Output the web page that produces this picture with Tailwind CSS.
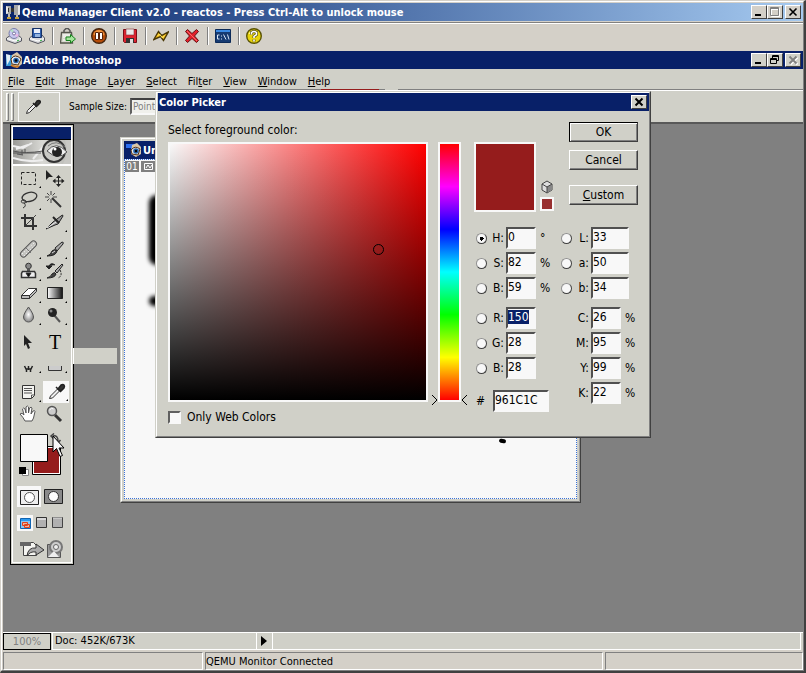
<!DOCTYPE html>
<html lang="en">
<head>
    <meta charset="UTF-8">
    <meta name="viewport" content="width=device-width, initial-scale=1.0">
    <title>Qemu Manager Client v2.0 - reactos</title>
    <script src="https://cdn.jsdelivr.net/npm/@tailwindcss/browser@4"></script>
</head>
<body class="font-['DejaVu_Sans_Condensed','DejaVu_Sans',sans-serif] text-[11px] leading-4 text-black">

    <div class="flex h-screen flex-col border-t border-l border-t-[#d4d0c8] border-l-[#d4d0c8] border-r-2 border-b-2 border-r-[#404040] border-b-[#404040] bg-[#d4d0c8]">
    <div class="flex flex-1 flex-col border border-t-white border-l-white border-r-[#808080] border-b-[#808080] pt-px pl-px">

        <!-- Host window title -->
        <header class="flex h-[18px] shrink-0 items-center bg-linear-to-r from-[#0a246a] to-[#a6caf0] pr-0.5 pl-0.5 text-white">
            <svg class="mr-px size-4" viewBox="0 0 16 16">
                <path d="M1 2h5v8H1zM9 1h6v10H9z" fill="#a9a9a9"/>
                <path d="M1 2l2 1v6l-2 1zM13 2l2-1v9l-2 1z" fill="#e8e8e8"/>
                <path d="M6 4h3v4H6zM3 4h1v4H3z" fill="#333"/>
                <path d="M3 10h2v4H3zM11 11h2v3h-2z" fill="#bbb"/>
                <path d="M2 14h4M10 14h4" stroke="#c9a13a" stroke-width="2"/>
            </svg>
            <h1 class="flex-1 pt-0.5 font-bold">Qemu Manager Client v2.0 - reactos - Press Ctrl-Alt to unlock mouse</h1>
            <button aria-label="Minimize" class="h-3.5 w-4 border border-t-white border-l-white border-r-[#404040] border-b-[#404040] bg-[#d4d0c8]">
                <svg class="h-3 w-3.5" viewBox="0 0 14 12"><path d="M3 8h6v2H3z"/></svg>
            </button>
            <button aria-label="Maximize" disabled class="mr-0.5 h-3.5 w-4 border border-t-white border-l-white border-r-[#404040] border-b-[#404040] bg-[#d4d0c8]">
                <svg class="h-3 w-3.5" viewBox="0 0 14 12" fill="none"><path d="M3.500 2.500h8v8h-8zM3 3.500h9" stroke="#fff"/><path d="M2.500 1.500h8v8h-8zM2 2.500h9" stroke="#808080"/></svg>
            </button>
            <button aria-label="Close" class="h-3.5 w-4 border border-t-white border-l-white border-r-[#404040] border-b-[#404040] bg-[#d4d0c8]">
                <svg class="h-3 w-3.5" viewBox="0 0 14 12"><path d="M3.500 2.500l7 7M10.500 2.500l-7 7" stroke="#000" stroke-width="1.600"/></svg>
            </button>
        </header>
        <div class="mt-px mb-px h-0.5 shrink-0 border-t border-b border-t-[#808080] border-b-white"></div>

        <!-- Host toolbar -->
        <nav class="flex h-[26px] shrink-0 items-center gap-[7px] pb-1 pl-[3px]">
            <button aria-label="CD drive"><svg class="size-4" viewBox="0 0 16 16">
                <path d="M.5 10L5 7h7l3.500 3v3L9 15.500 .5 12.500z" fill="#d8d8dc" stroke="#55565f"/><path d="M1 10.500l8 2.500 6-2.500" fill="none" stroke="#fff"/>
                <circle cx="8" cy="5.500" r="5" fill="#c8c8ee" stroke="#777ca8"/><path d="M8 5.500L4 2.500 7 1z" fill="#b2e2c2"/><path d="M8 5.500l5 1-2 3z" fill="#e9b9e5"/><circle cx="8" cy="5.500" r="1.500" fill="#fff" stroke="#7770a0"/><path d="M11 13l2-1" stroke="#2a3"/>
            </svg></button>
            <button aria-label="Floppy drive"><svg class="size-4" viewBox="0 0 16 16">
                <path d="M.5 10L4 7h9l2.500 3v3L9 15.500 .5 12.500z" fill="#d8d8dc" stroke="#55565f"/><path d="M1 10.500l8 2.500 6-2.500" fill="none" stroke="#fff"/>
                <path d="M3.500 .5h9v9h-9z" fill="#2d5dab" stroke="#173269"/><path d="M5 1h6v4H5z" fill="#e9eefa"/><path d="M6 6h5v3H6z" fill="#94b3df"/><path d="M11 13l2-1" stroke="#2a3"/>
            </svg></button>
            <span class="h-[18px] w-px bg-[#808080] shadow-[1px_0_#fff]"></span>
            <button aria-label="Export"><svg class="size-4" viewBox="0 0 16 16">
                <path d="M4 5V2.500L6 .5h2l2 2V5" fill="none" stroke="#555" stroke-width="1.500"/><path d="M1.500 4.500h10l1 10.500H.500z" fill="#d8d8ce" stroke="#55554c" stroke-width="1.300"/><path d="M3 7h7M3 9h3M3 12h3" stroke="#fff"/>
                <path d="M6 9h4.500V6.500L15.500 11l-5 4v-2.500H6z" fill="#a6e49c" stroke="#16831c"/>
            </svg></button>
            <span class="h-[18px] w-px bg-[#808080] shadow-[1px_0_#fff]"></span>
            <button aria-label="Pause"><svg class="size-4" viewBox="0 0 16 16">
                <circle cx="8" cy="8" r="7.300" fill="#b54b08" stroke="#43250f" stroke-width="1.400"/><path d="M2.500 7a5.500 5 0 0 1 11 0q-5 2-11 0" fill="#ec913c"/><path d="M4.500 4.500h3v7h-3zM8.500 4.500h3v7h-3z" fill="#fff" stroke="#582309"/>
            </svg></button>
            <span class="h-[18px] w-px bg-[#808080] shadow-[1px_0_#fff]"></span>
            <button aria-label="Save"><svg class="size-4" viewBox="0 0 16 16">
                <path d="M1.500 1.500h13v13h-12l-1-1z" fill="#dd2430" stroke="#7a0e17"/><path d="M4 1h8v6H4z" fill="#e9e9e9" stroke="#8a3038" stroke-width=".6"/><path d="M4 10h8v5H4z" fill="#333"/><path d="M8 11h3v4H8z" fill="#ddd"/>
            </svg></button>
            <span class="h-[18px] w-px bg-[#808080] shadow-[1px_0_#fff]"></span>
            <button aria-label="Reset"><svg class="size-4" viewBox="0 0 16 16">
                <path d="M.8 11.500L5.500 3.500 8.500 7.500 15.300 4 10.500 12.500 7.500 8.500z" fill="#f5bd16" stroke="#4a3807" stroke-width="1.400"/><path d="M4.500 8l2-2 3 4 2-2.500" fill="none" stroke="#ffe96a"/>
            </svg></button>
            <span class="h-[18px] w-px bg-[#808080] shadow-[1px_0_#fff]"></span>
            <button aria-label="Stop"><svg class="size-4" viewBox="0 0 16 16">
                <path d="M1.500 3.500l2-2L8 5.500l4.500-4 2 2-4 4.500 4 4.500-2 2L8 10.500l-4.500 4-2-2 4-4.500z" fill="#e22029" stroke="#651217"/><path d="M3 3l10 10" stroke="#f66a6a"/>
            </svg></button>
            <span class="h-[18px] w-px bg-[#808080] shadow-[1px_0_#fff]"></span>
            <button aria-label="Console"><svg class="size-4" viewBox="0 0 16 16">
                <path d="M.5 1.500h15v13H.5z" fill="#173b72" stroke="#0c2a58"/><path d="M1 2h14v2H1z" fill="#3b8ae4"/><path d="M4.500 7H2.500v4h2M6.500 7.500v1M6.500 10.500v1M8.500 6.500l2.500 5M12.500 6.500l1.500 5" stroke="#d8e4f5" fill="none"/>
            </svg></button>
            <span class="h-[18px] w-px bg-[#808080] shadow-[1px_0_#fff]"></span>
            <button aria-label="About"><svg class="size-4" viewBox="0 0 16 16">
                <circle cx="8" cy="8" r="7.300" fill="#e8d30b" stroke="#5a5406" stroke-width="1.400"/><path d="M3 6a5 5 0 0 1 9-1" fill="none" stroke="#fffab5"/><path d="M5.500 6.500V4.500q2.500-2 5 0v2L8 8.500V10M8 11.500v2" fill="none" stroke="#554f10" stroke-width="3"/><path d="M5.500 6.500V4.500q2.500-2 5 0v2L8 8.500V10M8 11.500v2" fill="none" stroke="#fff" stroke-width="1.600"/>
            </svg></button>
        </nav>

        <!-- Photoshop -->
        <main class="relative flex flex-1 flex-col bg-[#d0d0c8]">
            <div class="flex h-[18px] shrink-0 items-center bg-[#082068] pr-0.5 pl-[3px] text-white">
                <svg class="mr-px size-4" viewBox="0 0 16 16">
                    <path d="M0 3h8v11H0z" fill="#3c9ad8"/><path d="M0 2l4 1v5L1 13z" fill="#e4eef6"/><path d="M6 3l5-3 5 5v7l-5 4-6-5z" fill="#d8c6a8"/><path d="M5 7q4-6 10 0l-3 6-6-1z" fill="#e8eef2" stroke="#563319"/><circle cx="10" cy="8.500" r="2.800" fill="#2563ab"/><circle cx="10" cy="8.500" r="1.300"/><path d="M5 13q5 3 8 1" stroke="#cf7a22" stroke-width="2" fill="none"/>
                </svg>
                <h2 class="flex-1 pt-0.5 font-bold">Adobe Photoshop</h2>
                <button aria-label="Minimize" class="h-3.5 w-4 border border-t-white border-l-white border-r-[#404040] border-b-[#404040] bg-[#d0d0c8]">
                    <svg class="h-3 w-3.5" viewBox="0 0 14 12"><path d="M3 8h6v2H3z"/></svg>
                </button>
                <button aria-label="Restore" class="mr-0.5 h-3.5 w-4 border border-t-white border-l-white border-r-[#404040] border-b-[#404040] bg-[#d0d0c8]">
                    <svg class="h-3 w-3.5" viewBox="0 0 14 12" fill="none" stroke="#000"><path d="M4.500 4V1.500h6v5H9M4 2.500h7M2.500 4.500h6v5h-6zM2 5.500h7"/></svg>
                </button>
                <button aria-label="Close" disabled class="h-3.5 w-4 border border-t-white border-l-white border-r-[#404040] border-b-[#404040] bg-[#d0d0c8]">
                    <svg class="h-3 w-3.5" viewBox="0 0 14 12"><path d="M4.500 3.500l7 7M11.500 3.500l-7 7" stroke="#fff" stroke-width="2"/><path d="M3.500 2.500l7 7M10.500 2.500l-7 7" stroke="#808080" stroke-width="2"/></svg>
                </button>
            </div>

            <nav class="flex h-5 shrink-0 items-center gap-[11px] pt-1.5 pl-[5px]">
                <a href="#"><u>F</u>ile</a>
                <a href="#"><u>E</u>dit</a>
                <a href="#"><u>I</u>mage</a>
                <a href="#"><u>L</u>ayer</a>
                <a href="#"><u>S</u>elect</a>
                <a href="#">Fil<u>t</u>er</a>
                <a href="#"><u>V</u>iew</a>
                <a href="#"><u>W</u>indow</a>
                <a href="#"><u>H</u>elp</a>
            </nav>
            <div class="flex h-px shrink-0">
                <span class="w-[318px] bg-[#808080]"></span>
                <span class="w-[58px] bg-[#951c1c]"></span>
                <span class="w-1.5 bg-[#808080]"></span>
                <span class="w-[13px]"></span>
                <span class="flex-1 bg-[#808080]"></span>
            </div>

            <!-- Options bar -->
            <div class="flex h-8 shrink-0 items-center border-t border-t-white pl-[3px]">
                <span class="h-7 w-[3px] border border-t-white border-l-white border-r-[#808080] border-b-[#808080]"></span>
                <span class="ml-0.5 h-7 w-[3px] border border-t-white border-l-white border-r-[#808080] border-b-[#808080]"></span>
                <button aria-label="Eyedropper presets" class="ml-1 flex h-[30px] w-[42px] items-center border border-[#f8f8f8] pl-1.5">
                    <svg class="size-4" viewBox="0 0 16 16"><path d="M1.500 14.500l1-3L9 5l2 2-6.500 6.500z" fill="#eee" stroke="#333"/><path d="M8 4l4 4M10 5l2-3q2-1 3 0t-1 3l-2 2z" stroke="#222" stroke-width="1.500" fill="#333"/></svg>
                </button>
                <label for="sample-size" class="ml-[9px] w-[61px] whitespace-nowrap text-[10px]">Sample Size:</label>
                <select id="sample-size" class="h-[17px] w-24 appearance-none border-2 border-t-[#404040] border-l-[#606060] border-r-[#f8f8f8] border-b-[#f8f8f8] bg-[#f0f0ec] pl-px text-[10px] leading-3 text-[#808080]"><option>Point Sample</option></select>
            </div>

            <!-- Workspace -->
            <div class="relative flex-1 border-t-2 border-t-[#585858] bg-[#808080]">

                <section aria-label="Untitled document" class="absolute top-[13px] left-[117px] flex h-[366px] w-[461px] flex-col border border-t-[#d0d0c8] border-l-[#d0d0c8] border-r-[#404040] border-b-[#404040] bg-[#d0d0c8]">
                    <div class="flex flex-1 flex-col border border-t-white border-l-white border-r-[#a0a0a0] border-b-[#808080] p-0.5">
                        <div class="flex h-[18px] items-center gap-px bg-[#082068] pl-0.5 font-bold text-white">
                            <svg class="size-4" viewBox="0 0 16 16"><path d="M0 2h9l2 3-4 4H5V6H0z" fill="#2c6ff0"/><path d="M6 3l5-2 4 4v7l-5 3-5-3z" fill="#d8c6a8"/><path d="M5 8q4-5 9-1l-2 6-6-1z" fill="#e8eef2" stroke="#563319"/><circle cx="10" cy="9" r="2.800" fill="#2563ab"/><circle cx="10" cy="9" r="1.200"/></svg>
                            <h3 class="pt-0.5">Untitled-1</h3>
                        </div>
                        <div class="relative flex-1 overflow-hidden border border-dotted border-[#3c72d8] bg-[#f8f8f8]">
                            <div class="flex gap-0.5 pt-px text-[10px] leading-[11px] text-white">
                                <span class="w-3.5 bg-[#808080] text-center">01</span>
                                <span class="flex h-[11px] w-3.5 items-center justify-center bg-[#808080]"><svg class="h-[9px] w-[11px]" viewBox="0 0 11 9" fill="none" stroke="#fff"><path d="M1.500 1.500h8v6h-8zM3 6l2-3 2 3 2-3"/></svg></span>
                            </div>
                            <span class="absolute top-[35px] left-6 h-[70px] w-10 rounded-lg bg-black blur-[2px]"></span>
                            <span class="absolute top-[136px] left-6 h-2.5 w-5 rounded-full bg-black blur-[2px]"></span>
                            <span class="absolute top-[279px] left-[374px] h-1 w-[7px] rotate-12 rounded-full bg-black"></span>
                        </div>
                    </div>
                </section>

                <!-- Toolbox -->
                <aside class="absolute top-0 left-[7px] flex w-16 flex-col border border-black bg-[#d0d0c8] p-px">
                    <div class="border border-t-white border-l-white border-r-white border-b-white">
                        <div class="h-[13px] border-b border-black bg-[#082068]"></div>
                        <svg class="h-6 w-full" viewBox="0 0 58 24" preserveAspectRatio="none">
                            <defs><linearGradient id="face"><stop offset="0" stop-color="#9a9a96"/><stop offset=".5" stop-color="#d8d8d4"/><stop offset="1" stop-color="#b8b8b4"/></linearGradient></defs>
                            <path d="M0 0h58v24H0z" fill="url(#face)"/>
                            <path d="M0 6l10 2 9-5M0 18q15 5 30 2M3 9l12-4M20 19l10-12" stroke="#eee" stroke-width="2" fill="none"/>
                            <path d="M0 11q12 3 30 0M9 10v5M12 9v3M4 14l6 1M0 13h28" stroke="#555" fill="none"/>
                            <circle cx="41" cy="11" r="11" fill="#c8c8c4" stroke="#333" stroke-width="2"/>
                            <path d="M52 0h6v24h-8q6-12 2-24" fill="#c8c8c4"/>
                            <path d="M34 11q9-11 20 1-9 9-20-1" fill="#eee" stroke="#555"/><circle cx="44" cy="12" r="5" fill="#222"/><circle cx="42" cy="9" r="1.500" fill="#fff"/><path d="M35 6q8-7 17 1" stroke="#777" fill="none"/>
                        </svg>
                    </div>
                    <div class="flex flex-col border border-t-white border-l-white border-r-white border-b-white pt-px pr-0.5 pb-[3px] pl-1">
                        <div class="grid grid-cols-[26px_26px] auto-rows-[22px]">
                            <button aria-label="Marquee"><svg class="h-[22px] w-[26px]" viewBox="0 0 26 22"><path d="M4.500 5.500h14v12h-14z" fill="none" stroke="#222" stroke-dasharray="3 2"/><path d="M24 19v2h-2z"/></svg></button>
                            <button aria-label="Move"><svg class="h-[22px] w-[26px]" viewBox="0 0 26 22"><path d="M3 3l7 7H6l-3 3z" fill="#222"/><path d="M15.500 10v8M11.500 14h8" stroke="#222"/><path d="M15.500 8l2.500 3h-5zM15.500 20l2.500-3h-5zM9.500 14l3-2.500v5zM21.500 14l-3-2.500v5z" fill="#222"/></svg></button>
                            <button aria-label="Lasso"><svg class="h-[22px] w-[26px]" viewBox="0 0 26 22"><ellipse cx="12.500" cy="8" rx="7.500" ry="4.500" transform="rotate(-14 12 8)" fill="none" stroke="#333" stroke-width="1.300"/><path d="M5 11q-2 3 2 3t2-2-4-1M7 14q3 3-1 5" fill="none" stroke="#333"/><path d="M24 19v2h-2z"/></svg></button>
                            <button aria-label="Magic wand"><svg class="h-[22px] w-[26px]" viewBox="0 0 26 22"><path d="M9 9l9 9" stroke="#333" stroke-width="2"/><path d="M8 2v4M8 10v4M2 8h4M10 8h4M4 4l2.500 2.500M12 4L9.500 6.500M4 12l2.500-2.500" stroke="#444"/></svg></button>
                            <button aria-label="Crop"><svg class="h-[22px] w-[26px]" viewBox="0 0 26 22"><path d="M8 3v12h12M4 7h12v12" fill="none" stroke="#333" stroke-width="2"/><path d="M9 14L19 4" stroke="#444"/></svg></button>
                            <button aria-label="Slice"><svg class="h-[22px] w-[26px]" viewBox="0 0 26 22"><path d="M3 18l7-7 8-6q2-2 2 0l-5 8-3 1z" fill="#999" stroke="#222"/><path d="M4 17l9-6" stroke="#eee"/><path d="M10 6l6 6" stroke="#222" stroke-width="2"/><path d="M24 19v2h-2z"/></svg></button>
                        </div>
                        <div class="mt-[5px] grid grid-cols-[26px_26px] auto-rows-[22px]">
                            <button aria-label="Healing brush"><svg class="h-[22px] w-[26px]" viewBox="0 0 26 22"><path d="M6.500 16L16.500 6" stroke="#555" stroke-width="7" stroke-linecap="round"/><path d="M6.500 16L16.500 6" stroke="#c4c4c0" stroke-width="5" stroke-linecap="round"/><path d="M5 16l12-11M7 18L18 7" stroke="#fff" stroke-dasharray="1 2"/><path d="M9 10l5 5" stroke="#777"/><path d="M24 19v2h-2z"/></svg></button>
                            <button aria-label="Brush"><svg class="h-[22px] w-[26px]" viewBox="0 0 26 22"><path d="M12 10l7-6q2 0 1 2l-6 7z" fill="#aaa" stroke="#222"/><path d="M4 18q4-1 5-5 3-3 5 0-1 5-10 5" fill="#444" stroke="#222"/><path d="M9 15l3-2" stroke="#ddd"/><path d="M24 19v2h-2z"/></svg></button>
                            <button aria-label="Clone stamp"><svg class="h-[22px] w-[26px]" viewBox="0 0 26 22"><circle cx="11.500" cy="6" r="2.800" fill="#888" stroke="#333"/><path d="M10 8h3v4h-3z" fill="#555"/><path d="M5.500 11.500h12l1 2v4h-14v-4z" fill="#eee" stroke="#333" stroke-width="1.500"/><path d="M5 17.500h13M9 13h5l-2.500 4z" fill="#111" stroke="#333"/><path d="M24 19v2h-2z"/></svg></button>
                            <button aria-label="History brush"><svg class="h-[22px] w-[26px]" viewBox="0 0 26 22"><path d="M12 11l7-7 1 1-6 8z" fill="#aaa" stroke="#222"/><path d="M4 18q4-1 5-4 3-3 4 0-1 4-9 4" fill="#444" stroke="#222"/><path d="M12 5Q8 2 6 6M3 6h6l-3 3z" fill="#222" stroke="#222"/><path d="M17 10q3 6-2 8" fill="none" stroke="#222" stroke-dasharray="2 1"/><path d="M24 19v2h-2z"/></svg></button>
                            <button aria-label="Eraser"><svg class="h-[22px] w-[26px]" viewBox="0 0 26 22"><path d="M4.500 13.500l7-7h8l-7 7z" fill="#fff" stroke="#333"/><path d="M4.500 13.500h8v3h-8zM12.500 13.500l7-7v3l-7 7z" fill="#bbb" stroke="#333"/><path d="M24 19v2h-2z"/></svg></button>
                            <button aria-label="Gradient"><svg class="h-[22px] w-[26px]" viewBox="0 0 26 22"><defs><linearGradient id="ramp"><stop stop-color="#fff"/><stop offset="1" stop-color="#111"/></linearGradient></defs><path d="M4.500 5.500h15v11h-15z" fill="url(#ramp)" stroke="#222"/><path d="M24 19v2h-2z"/></svg></button>
                            <button aria-label="Blur"><svg class="h-[22px] w-[26px]" viewBox="0 0 26 22"><defs><radialGradient id="drop"><stop stop-color="#fff"/><stop offset="1" stop-color="#888"/></radialGradient></defs><path d="M11.500 3q5 7 5 10a5 5 0 0 1-10 0q0-3 5-10z" fill="url(#drop)" stroke="#555"/><path d="M24 19v2h-2z"/></svg></button>
                            <button aria-label="Burn"><svg class="h-[22px] w-[26px]" viewBox="0 0 26 22"><path d="M11 11l6 7" stroke="#555" stroke-width="2"/><circle cx="9.500" cy="8.500" r="4.500" fill="#222"/><circle cx="8" cy="7" r="1.500" fill="#888"/><path d="M24 19v2h-2z"/></svg></button>
                        </div>
                        <div class="mt-[5px] grid grid-cols-[26px_26px] auto-rows-[22px]">
                            <button aria-label="Path selection"><svg class="h-[22px] w-[26px]" viewBox="0 0 26 22"><path d="M7 4l8 8h-4l2 5-2 1-2-5-2 2z" fill="#222"/></svg></button>
                            <button aria-label="Type" class="pr-0.5 font-['Liberation_Serif',serif] text-[20px] leading-5">T</button>
                            <button aria-label="Pen"><svg class="h-[22px] w-[26px]" viewBox="0 0 26 22"><path d="M7.500 13l2 4M15.500 13l-2 4M9 16h5M9.500 17v2M13.500 17v2M11.500 13v4" stroke="#222" stroke-width="1.500"/><path d="M24 18v2h-2z"/></svg></button>
                            <button aria-label="Shape"><svg class="h-[22px] w-[26px]" viewBox="0 0 26 22"><path d="M5.500 13v4.500h13V13" fill="#ccc" stroke="#333"/><path d="M24 18v2h-2z"/></svg></button>
                        </div>
                        <div class="mt-1.5 grid grid-cols-[26px_26px] auto-rows-[22px]">
                            <button aria-label="Notes"><svg class="h-[22px] w-[26px]" viewBox="0 0 26 22"><path d="M5.500 4.500h12v10l-3 3h-9z" fill="#f4f4f0" stroke="#333"/><path d="M7 7.500h8M7 9.500h8M7 12h8M14.500 17v-3H17" stroke="#555" fill="none"/><path d="M24 19v2h-2z"/></svg></button>
                            <button aria-label="Eyedropper" class="bg-[#f8f8f8]"><svg class="h-[22px] w-[26px]" viewBox="0 0 26 22"><path d="M6.500 17.500l1-2.500 7-7 2 2-7 7z" fill="#eee" stroke="#333"/><path d="M13 6l5 5M15 8l3-4q2-1 3 0t0 3l-3 3z" stroke="#222" stroke-width="1.500" fill="#333"/><path d="M25 18v2h-2z"/></svg></button>
                            <button aria-label="Hand"><svg class="h-[22px] w-[26px]" viewBox="0 0 26 22"><path d="M8 18q-2-4-5-7 2-2 4 1L5.500 6q1-2 2.500 0l1 4V4q1.500-2 2.500 0v6l1-5q2-1.500 2.500 0L14 11l2-3q2-1 2 .5L16.500 15 15 18z" fill="#fff" stroke="#555"/></svg></button>
                            <button aria-label="Zoom"><svg class="h-[22px] w-[26px]" viewBox="0 0 26 22"><path d="M12 12l6 6" stroke="#333" stroke-width="3"/><circle cx="9" cy="8" r="4.500" fill="#ccc" stroke="#555" stroke-width="1.500"/><path d="M6.500 7q2-3 4-1" stroke="#fff" fill="none"/></svg></button>
                        </div>
                        <svg role="img" aria-label="Foreground and background colors" class="mt-2 h-11 w-[52px]" viewBox="0 0 52 44">
                            <path d="M15.500 13.500h28v28h-28z" fill="#fff" stroke="#000"/><path d="M17 15h25v25H17z" fill="#951c1c"/>
                            <path d="M3.500 1.500h27v27h-27z" fill="#f8f8f8" stroke="#000"/>
                            <path d="M5.500 36.500h6v6h-6z" fill="#fff" stroke="#888"/><path d="M2 34h7v7H2z"/>
                            <path d="M36 3q5-1 5 5M37 .5L34 3l3 3M38.500 7l2.500 3 2.500-3" fill="none" stroke="#444" stroke-width="1.500"/>
                        </svg>
                        <div class="mt-[9px] flex h-[21px] gap-px">
                            <button aria-label="Standard mode" class="w-6 bg-[#f8f8f8]"><svg class="h-[21px] w-6" viewBox="0 0 24 21"><path d="M3.500 4.500h18v14h-18z" fill="#eee" stroke="#222"/><circle cx="12.500" cy="11.500" r="5" fill="#fff" stroke="#555"/></svg></button>
                            <button aria-label="Quick mask mode" class="w-6"><svg class="h-[21px] w-6" viewBox="0 0 24 21"><path d="M2.500 3.500h18v14h-18z" fill="#8a8a8a" stroke="#222"/><circle cx="11.500" cy="10.500" r="5" fill="#fff" stroke="#333"/></svg></button>
                        </div>
                        <div class="mt-2 flex h-4">
                            <button aria-label="Standard screen" class="w-4 bg-[#f8f8f8]"><svg class="size-4" viewBox="0 0 16 16"><path d="M3.500 3.500h10v10h-10z" fill="#8cc6f0" stroke="#1064b0"/><path d="M4 4h9v2H4z" fill="#2b9af0"/><path d="M5.500 7.500h5v3h-5zM7.500 9.500h5v3h-5z" fill="#f0b49a" stroke="#e0401c"/></svg></button>
                            <button aria-label="Full screen with menu" class="w-4"><svg class="size-4" viewBox="0 0 16 16"><path d="M3.500 2.500h10v10h-10z" fill="#b0b0b0" stroke="#333"/><path d="M4 4h9" stroke="#fff"/></svg></button>
                            <button aria-label="Full screen" class="w-4"><svg class="size-4" viewBox="0 0 16 16"><path d="M3.500 2.500h10v10h-10z" fill="#b0b0b0" stroke="#444"/><path d="M4 3h9" stroke="#ddd"/></svg></button>
                        </div>
                        <button aria-label="Jump to ImageReady" class="mt-2"><svg class="h-5 w-[52px]" viewBox="0 0 52 20"><path d="M6.500 3.500h10l3 3v10h-13z" fill="#f4f4f0" stroke="#444"/><path d="M3 3h11v4H3z" fill="#666"/><path d="M10 17q1-9 9-8V5l8 6-8 5v-3q-6-1-9 4" fill="#aaa" stroke="#333"/><path d="M30.500 5.500h13v13h-13z" fill="#999" stroke="#555"/><circle cx="39" cy="8" r="6" fill="#ccc" stroke="#777" stroke-width="2"/><circle cx="39" cy="8" r="2.500" fill="#eee" stroke="#666"/><path d="M31 18l6-6 5 6z" fill="#eee"/></svg></button>
                    </div>
                </aside>

                <span class="absolute top-56 left-[70px] h-4 w-11 border-l border-l-white bg-[#d0d0c8]"></span>

                <svg class="absolute top-[311px] left-[49px] h-6 w-3.5" viewBox="0 0 14 24"><path d="M1 1v16l3.500-3.500 3.500 8 2.500-1-3.500-7.500h5z" fill="#f8f8f8" stroke="#000"/></svg>
            </div>

            <!-- Photoshop status bar -->
            <div class="flex h-[18px] shrink-0 items-stretch border-t border-t-white pr-0.5">
                <input aria-label="Zoom level" value="100%" class="w-12 border border-black bg-transparent text-center text-[#808080]">
                <span class="ml-px w-[204px] border-b border-l border-white pl-0.5">Doc: 452K/673K</span>
                <button aria-label="Status options" class="w-4 border-b border-l border-white"><svg class="h-4 w-3.5" viewBox="0 0 14 16"><path d="M4 3l6 5-6 5z"/></svg></button>
                <span class="flex-1 border-r border-b border-l border-white"></span>
            </div>

            <!-- Color Picker -->
            <form class="absolute top-10 left-[152px] w-[496px] border border-t-[#d0d0c8] border-l-[#d0d0c8] border-r-[#404040] border-b-[#404040] bg-[#d0d0c8] text-[12px]">
                <div class="border border-t-white border-l-white border-r-[#808080] border-b-[#808080] pl-px">
                    <div class="flex h-[18px] items-center bg-[#082068] pr-0.5 pl-px text-[11px] text-white">
                        <h3 class="flex-1 pt-0.5 font-bold">Color Picker</h3>
                        <button type="button" aria-label="Close" class="h-3.5 w-4 border border-t-white border-l-white border-r-[#404040] border-b-[#404040] bg-[#d0d0c8]">
                            <svg class="h-3 w-3.5" viewBox="0 0 14 12"><path d="M3.500 2.500l7 7M10.500 2.500l-7 7" stroke="#000" stroke-width="2"/></svg>
                        </button>
                    </div>
                    <div class="flex h-[325px] pt-[11px] pl-2.5">
                        <div class="w-[264px]">
                            <p class="h-5">Select foreground color:</p>
                            <div class="relative size-[260px] border-2 border-[#f8f8f8] bg-[linear-gradient(to_top,#000,transparent),linear-gradient(to_right,#f8f8f8,#ff0000)]">
                                <span class="absolute top-[100px] left-[203px] size-[11px] rounded-full border border-black"></span>
                            </div>
                            <label class="mt-[7px] flex items-center gap-1.5">
                                <input type="checkbox" class="size-[13px] appearance-none border-2 border-t-[#606060] border-l-[#606060] border-r-[#f8f8f8] border-b-[#f8f8f8] bg-[#f8f8f8]">
                                Only Web Colors
                            </label>
                        </div>
                        <div class="mt-5 flex h-[264px] w-[42px] items-end">
                            <svg class="h-3 w-1.5" viewBox="0 0 6 12"><path d="M0 1l5 5-5 5" fill="none" stroke="#000"/></svg>
                            <span class="h-[260px] w-[23px] self-start border-2 border-[#f8f8f8] bg-[linear-gradient(to_top,#f00,#ff0,#0f0,#0ff,#00f,#f0f,#f00)]"></span>
                            <svg class="h-3 w-1.5" viewBox="0 0 6 12"><path d="M6 1L1 6l5 5" fill="none" stroke="#000"/></svg>
                        </div>
                        <div class="w-[164px]">
                            <div class="flex h-[105px]">
                                <div class="mt-5 h-[70px] w-[62px] border-2 border-[#f8f8f8] bg-[#951c1c]"></div>
                                <div class="mt-[58px] ml-1 w-[29px]">
                                    <svg class="h-[14px] w-[14px]" viewBox="0 0 14 14"><path d="M7 1l5 3v6l-5 3-5-3V4z" fill="#ddd" stroke="#444"/><path d="M7 7l5-3v6l-5 3z" fill="#888"/><path d="M2 4l5 3 5-3M7 7v6" fill="none" stroke="#444"/></svg>
                                    <button type="button" aria-label="Nearest web color" class="mt-[3px] block size-3.5 border-2 border-[#f8f8f8] bg-[#983030]"></button>
                                </div>
                                <div class="flex flex-col">
                                    <button type="submit" class="h-5 w-[69px] border border-black border-r-[#404040] border-b-[#404040] shadow-[inset_1px_1px_#fff,inset_-1px_-1px_#808080]">OK</button>
                                    <button type="button" class="mt-2 h-5 w-[69px] border border-t-white border-l-white border-r-[#404040] border-b-[#404040] shadow-[inset_-1px_-1px_#808080]">Cancel</button>
                                    <button type="button" class="mt-[15px] h-5 w-[69px] border border-t-white border-l-white border-r-[#404040] border-b-[#404040] shadow-[inset_-1px_-1px_#808080]"><u>C</u>ustom</button>
                                </div>
                            </div>
                            <div class="flex justify-between">
                                <div class="flex flex-col gap-[3px] pl-0.5" id="left-fields"></div>
                                <div class="-mr-[7px] flex flex-col gap-[3px]" id="right-fields"></div>
                            </div>
                        </div>
                    </div>
                </div>
            </form>
        </main>

        <!-- Host status bar -->
        <footer class="mt-0.5 flex h-[18px] shrink-0 gap-0.5">
            <span class="w-[200px] border border-t-[#808080] border-l-[#808080] border-r-white border-b-white"></span>
            <span class="w-[398px] border border-t-[#808080] border-l-[#808080] border-r-white border-b-white pt-px">QEMU Monitor Connected</span>
            <span class="flex-1 border border-t-[#808080] border-l-[#808080] border-r-white border-b-white"></span>
        </footer>
    </div>
    </div>

    <script>
        // [id, label, value, unit, has radio]
        const leftFields = [
            ['hue', 'H:', '0', '°', true],
            ['sat', 'S:', '82', '%', true],
            ['bri', 'B:', '59', '%', true],
            null,
            ['red', 'R:', '150', '', true],
            ['green', 'G:', '28', '', true],
            ['blue', 'B:', '28', '', true],
        ];
        const rightFields = [
            ['lab-l', 'L:', '33', '', true],
            ['lab-a', 'a:', '50', '', true],
            ['lab-b', 'b:', '34', '', true],
            null,
            ['cyan', 'C:', '26', '%', false],
            ['magenta', 'M:', '95', '%', false],
            ['yellow', 'Y:', '99', '%', false],
            ['black', 'K:', '22', '%', false],
        ];

        const radioClass = 'size-[11px] shrink-0 appearance-none rounded-full border border-t-[#909090] border-l-[#909090] border-r-[#404040] border-b-[#404040] bg-[#f8f8f8] checked:bg-[radial-gradient(circle,#000_2px,#f8f8f8_2px)]';
        const inputClass = 'h-[22px] border-2 border-t-[#505050] border-l-[#505050] border-r-[#f8f8f8] border-b-[#f8f8f8] bg-[#f8f8f8] pb-0.5 leading-4 outline-none selection:bg-[#082068] selection:text-white';

        function renderFields(target, fields) {
            document.getElementById(target).innerHTML = fields.map(field => {
                if (!field) return '<div class="h-0.5"></div>';
                const [id, label, value, unit, radio] = field;
                const width = id.startsWith('lab') ? 'w-[38px]' : 'w-[30px]';
                return `
                    <div class="flex h-[22px] items-center">
                        ${radio ? `<input type="radio" name="mode" aria-label="${label}" class="${radioClass}" ${id === 'hue' ? 'checked' : ''}>` : '<span class="w-[11px]"></span>'}
                        <label for="${id}" class="w-[19px] pr-0.5 text-right">${label}</label>
                        <input id="${id}" value="${value}" class="${inputClass} ${width}">
                        <span class="w-4 pl-1">${unit}</span>
                    </div>`;
            }).join('');
        }

        renderFields('left-fields', leftFields);
        renderFields('right-fields', rightFields);

        document.getElementById('left-fields').insertAdjacentHTML('beforeend', `
            <div class="mt-2 flex h-[22px] items-center">
                <label for="hex" class="w-[17px]">#</label>
                <input id="hex" value="961C1C" class="${inputClass} w-14">
            </div>`);

        document.getElementById('red').select();
    </script>
</body>
</html>
